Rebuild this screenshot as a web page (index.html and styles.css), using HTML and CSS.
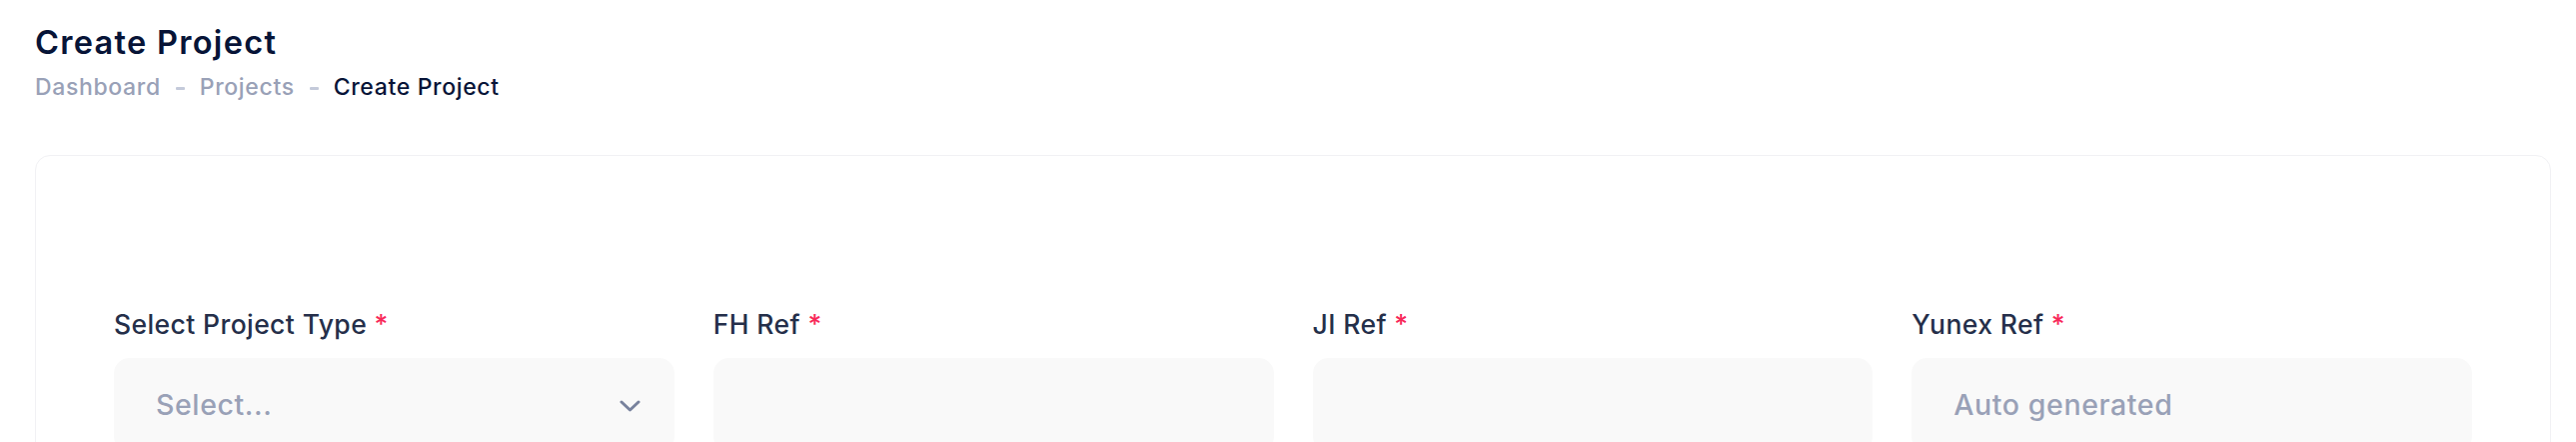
FILE: index.html
```html
<!DOCTYPE html>
<html lang="en">
<head>
<meta charset="utf-8">
<title>Create Project</title>
<link rel="stylesheet" href="styles.css">
</head>
<body>
<div class="page">
  <div class="toolbar">
    <h1 class="page-title">Create Project</h1>
    <ul class="breadcrumb">
      <li class="crumb muted">Dashboard</li>
      <li class="dash"></li>
      <li class="crumb muted">Projects</li>
      <li class="dash"></li>
      <li class="crumb current">Create Project</li>
    </ul>
  </div>
  <div class="card">
    <div class="form-grid">
      <div class="field">
        <label class="label">Select Project Type <span class="req">*</span></label>
        <div class="control select">
          <span class="placeholder">Select...</span>
          <svg class="chevron" width="21" height="12" viewBox="0 0 21 12" aria-hidden="true"><polyline points="2,2 10.5,10 19,2" fill="none" stroke="#78829D" stroke-width="3" stroke-linecap="round" stroke-linejoin="round"/></svg>
        </div>
      </div>
      <div class="field">
        <label class="label">FH Ref <span class="req">*</span></label>
        <div class="control"><span class="placeholder"></span></div>
      </div>
      <div class="field">
        <label class="label">JI Ref <span class="req">*</span></label>
        <div class="control"><span class="placeholder"></span></div>
      </div>
      <div class="field">
        <label class="label">Yunex Ref <span class="req">*</span></label>
        <div class="control"><span class="placeholder">Auto generated</span></div>
      </div>
    </div>
  </div>
</div>
</body>
</html>
```

FILE: styles.css
```css
* { box-sizing: border-box; }
html, body {
  margin: 0;
  padding: 0;
  background: #ffffff;
  font-family: Inter, "Noto Sans", "Liberation Sans", sans-serif;
}
.page {
  padding: 23px 25px 40px 35px;
}
.toolbar {
  display: flex;
  flex-direction: column;
  gap: 8px;
}
.page-title {
  margin: 0;
  font-size: 32.5px;
  line-height: 1.2;
  font-weight: 600;
  letter-spacing: 1.3px;
  color: #071437;
}
.breadcrumb {
  list-style: none;
  margin: 0;
  padding: 0;
  display: flex;
  align-items: center;
  gap: 15px;
  font-size: 23px;
  line-height: 1.5;
  font-weight: 500;
  letter-spacing: 0.65px;
}
.crumb.muted { color: #99A1B7; }
.crumb.current { color: #071437; }
.dash {
  width: 9px;
  height: 3px;
  border-radius: 1px;
  background: #C4CADA;
  margin-top: 2px;
}
.card {
  margin-top: 50px;
  border: 1px solid #F1F1F4;
  border-radius: 15px;
  background: #ffffff;
  padding: 149px 78px 60px 78px;
}
.form-grid {
  display: grid;
  grid-template-columns: repeat(4, 1fr);
  column-gap: 39px;
}
.field {
  display: flex;
  flex-direction: column;
  gap: 14px;
}
.label {
  font-size: 26.5px;
  line-height: 1.5;
  font-weight: 500;
  letter-spacing: 0.4px;
  color: #252F4A;
}
.req { color: #F8285A; }
.control {
  display: flex;
  align-items: center;
  justify-content: space-between;
  background: #F9F9F9;
  border: 1px solid #F9F9F9;
  border-radius: 15px;
  padding: 24.5px 33px 24.5px 41px;
  font-size: 28.5px;
  line-height: 1.5;
  min-height: 93px;
}
.placeholder {
  color: #99A1B7;
  font-weight: 500;
  letter-spacing: 0.6px;
  min-height: 1.5em;
}
.chevron { flex: none; margin-top: 2px; }
```
